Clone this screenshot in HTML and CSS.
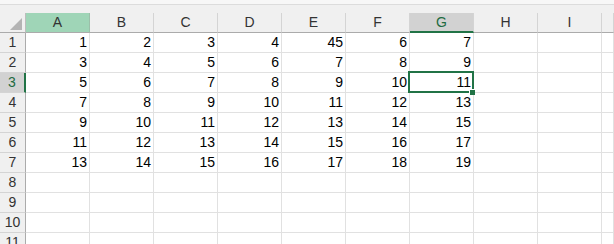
FILE: index.html
```html
<!DOCTYPE html>
<html lang="en">
<head>
  <meta charset="UTF-8">
  <title>Sheet1</title>
  <link rel="stylesheet" href="styles.css">
</head>
<body>
  <div class="topbar"></div>
  <div class="sheet">
    <div class="corner"><span class="tri"></span></div>
    <div class="col-head col-sel">A</div>
    <div class="col-head">B</div>
    <div class="col-head">C</div>
    <div class="col-head">D</div>
    <div class="col-head">E</div>
    <div class="col-head">F</div>
    <div class="col-head col-active">G</div>
    <div class="col-head">H</div>
    <div class="col-head">I</div>
    <div class="col-head"></div>

    <div class="row-head">1</div>
    <div class="cell">1</div><div class="cell">2</div><div class="cell">3</div><div class="cell">4</div><div class="cell">45</div><div class="cell">6</div><div class="cell">7</div><div class="cell"></div><div class="cell"></div><div class="cell"></div>

    <div class="row-head">2</div>
    <div class="cell">3</div><div class="cell">4</div><div class="cell">5</div><div class="cell">6</div><div class="cell">7</div><div class="cell">8</div><div class="cell">9</div><div class="cell"></div><div class="cell"></div><div class="cell"></div>

    <div class="row-head row-active">3</div>
    <div class="cell">5</div><div class="cell">6</div><div class="cell">7</div><div class="cell">8</div><div class="cell">9</div><div class="cell">10</div><div class="cell active">11<span class="frame"><span class="handle"></span></span></div><div class="cell"></div><div class="cell"></div><div class="cell"></div>

    <div class="row-head">4</div>
    <div class="cell">7</div><div class="cell">8</div><div class="cell">9</div><div class="cell">10</div><div class="cell">11</div><div class="cell">12</div><div class="cell">13</div><div class="cell"></div><div class="cell"></div><div class="cell"></div>

    <div class="row-head">5</div>
    <div class="cell">9</div><div class="cell">10</div><div class="cell">11</div><div class="cell">12</div><div class="cell">13</div><div class="cell">14</div><div class="cell">15</div><div class="cell"></div><div class="cell"></div><div class="cell"></div>

    <div class="row-head">6</div>
    <div class="cell">11</div><div class="cell">12</div><div class="cell">13</div><div class="cell">14</div><div class="cell">15</div><div class="cell">16</div><div class="cell">17</div><div class="cell"></div><div class="cell"></div><div class="cell"></div>

    <div class="row-head">7</div>
    <div class="cell">13</div><div class="cell">14</div><div class="cell">15</div><div class="cell">16</div><div class="cell">17</div><div class="cell">18</div><div class="cell">19</div><div class="cell"></div><div class="cell"></div><div class="cell"></div>

    <div class="row-head">8</div>
    <div class="cell"></div><div class="cell"></div><div class="cell"></div><div class="cell"></div><div class="cell"></div><div class="cell"></div><div class="cell"></div><div class="cell"></div><div class="cell"></div><div class="cell"></div>

    <div class="row-head">9</div>
    <div class="cell"></div><div class="cell"></div><div class="cell"></div><div class="cell"></div><div class="cell"></div><div class="cell"></div><div class="cell"></div><div class="cell"></div><div class="cell"></div><div class="cell"></div>

    <div class="row-head">10</div>
    <div class="cell"></div><div class="cell"></div><div class="cell"></div><div class="cell"></div><div class="cell"></div><div class="cell"></div><div class="cell"></div><div class="cell"></div><div class="cell"></div><div class="cell"></div>

    <div class="row-head">11</div>
    <div class="cell"></div><div class="cell"></div><div class="cell"></div><div class="cell"></div><div class="cell"></div><div class="cell"></div><div class="cell"></div><div class="cell"></div><div class="cell"></div><div class="cell"></div>
  </div>
</body>
</html>
```

FILE: styles.css
```css
* { box-sizing: border-box; }
body {
  margin: 0;
  background: #fff;
  font-family: 'Liberation Sans', Arial, sans-serif;
  font-size: 14px;
  color: #000;
  overflow: hidden;
}
.topbar {
  height: 13px;
  background: #f0f0f0;
  border-top: 4px solid #f7f7f7;
  box-shadow: inset 0 1px 0 #dcdcdc;
}
.sheet {
  display: grid;
  grid-template-columns: 26px repeat(9, 64px) 1fr;
  grid-auto-rows: 20px;
}
.corner {
  position: relative;
  background: #f0f0f0;
  border-right: 1px solid #bdbdbd;
  border-bottom: 1px solid #ababab;
}
.corner .tri {
  position: absolute;
  right: 3px;
  bottom: 2px;
  width: 0;
  height: 0;
  border-left: 12px solid transparent;
  border-bottom: 12px solid #b4b4b4;
}
.col-head {
  background: #f0f0f0;
  border-right: 1px solid #d4d4d4;
  border-bottom: 1px solid #ababab;
  color: #333;
  text-align: center;
  line-height: 19px;
}
.col-sel {
  background: #9fd5b7;
  border-right-color: #9bbfa9;
}
.col-active {
  background: #d2d2d2;
  color: #1e6b41;
  border-bottom: 2px solid #217346;
}
.row-head {
  background: #f0f0f0;
  border-right: 1px solid #ababab;
  border-bottom: 1px solid #d4d4d4;
  color: #333;
  text-align: center;
  line-height: 19px;
}
.row-active {
  background: #d2d2d2;
  color: #1e6b41;
  border-right: 2px solid #217346;
}
.cell {
  border-right: 1px solid #e1e1e1;
  border-bottom: 1px solid #e1e1e1;
  text-align: right;
  padding-right: 2px;
  line-height: 19px;
}
.active {
  position: relative;
}
.frame {
  position: absolute;
  left: -2px;
  top: -2px;
  right: -1px;
  bottom: -1px;
  border: 2px solid #217346;
}
.handle {
  position: absolute;
  right: -3px;
  bottom: -4px;
  width: 6px;
  height: 6px;
  background: #217346;
  border-left: 1px solid #fff;
  border-top: 1px solid #fff;
}
```
